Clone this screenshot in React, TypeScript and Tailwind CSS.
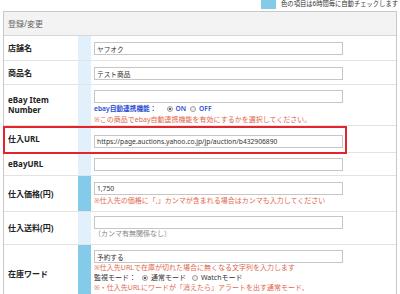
import React from 'react';

const FONT = "font-['Noto_Sans','Noto_Sans_CJK_JP',sans-serif]";

interface RowProps {
  label: React.ReactNode;
  dark?: boolean;
  h: string;
  pt: string;
  children: React.ReactNode;
  className?: string;
}

const Row: React.FC<RowProps> = ({ label, dark = false, h, pt, children, className = '' }) => (
  <div className={`flex border-b border-[#e3e3e3] ${h} ${className}`}>
    <div className="w-[74px] pl-[4px] flex items-center text-[8px] leading-[10px] font-bold text-[#222]">
      {label}
    </div>
    <div className={`w-[13px] ${dark ? 'bg-[#84cbea]' : 'bg-[#e1f0fb]'}`} />
    <div className={`flex-1 pl-[3px] flex flex-col ${pt}`}>{children}</div>
  </div>
);

const Field: React.FC<{ value?: string }> = ({ value = '' }) => (
  <input
    readOnly
    value={value}
    className="w-[249px] h-[13px] shrink-0 border border-[#c6c6c6] bg-white px-[2px] text-[6.7px] text-[#333] outline-none"
  />
);

const Radio: React.FC<{ checked?: boolean }> = ({ checked = false }) => (
  <span className="inline-flex w-[6px] h-[6px] rounded-full border border-[#a0a0a0] bg-[#eee] items-center justify-center mr-[3px]">
    {checked && <span className="w-[2px] h-[2px] rounded-full bg-[#333]" />}
  </span>
);

const Note: React.FC<{ children: React.ReactNode; color?: string; lh?: string }> = ({
  children,
  color = 'text-[#e2664c]',
  lh = 'leading-[10px]',
}) => <div className={`text-[7px] whitespace-nowrap ${lh} ${color}`}>{children}</div>;

export default function App() {
  return (
    <div className={`w-[400px] h-[294px] overflow-hidden bg-white ${FONT}`}>
      {/* legend */}
      <div className="h-[11px] flex justify-end items-start pr-[2px]">
        <span className="w-[15px] h-[9px] bg-[#84cbea] mr-[5px]" />
        <span className="text-[6.3px] leading-[10px] text-[#333] mt-[-1px]">色の項目は6時間毎に自動チェックします</span>
      </div>

      <div className="mx-[3px] border border-[#c8c8c8]">
        <div className="h-[24px] bg-[#f3f3f3] border-b border-[#d6d6d6] pl-[4px] flex items-center text-[8px] text-[#666]">
          登録/変更
        </div>

        <Row label="店舗名" h="h-[25px]" pt="pt-[6px]">
          <Field value="ヤフオク" />
        </Row>

        <Row label="商品名" h="h-[24px]" pt="pt-[6px]">
          <Field value="テスト商品" />
        </Row>

        <Row
          label={
            <span>
              eBay Item
              <br />
              Number
            </span>
          }
          h="h-[41px]"
          pt="pt-[5px]"
        >
          <Field />
          <div className="flex items-center text-[6.7px] leading-[12px] text-[#2a49d3] font-semibold whitespace-nowrap">
            <span className="mr-[10px]">ebay自動連携機能：</span>
            <Radio checked />
            <span className="mr-[4px]">ON</span>
            <Radio />
            <span>OFF</span>
          </div>
          <Note>※この商品でebay自動連携機能を有効にするかを選択してください。</Note>
        </Row>

        <Row label="仕入URL" h="h-[27px]" pt="pt-[9px]" className="relative">
          <div className="absolute top-0 left-[-1px] w-[344px] h-[28px] border-2 border-[#e3242b]" />
          <Field value="https://page.auctions.yahoo.co.jp/jp/auction/b432906890" />
        </Row>

        <Row label="eBayURL" h="h-[23px]" pt="pt-[5px]">
          <Field />
        </Row>

        <Row label="仕入価格(円)" dark h="h-[36px]" pt="pt-[6px]">
          <Field value="1,750" />
          <Note lh="leading-[12px]">※仕入先の価格に「,」カンマが含まれる場合はカンマも入力してください</Note>
        </Row>

        <Row label="仕入送料(円)" h="h-[33px]" pt="pt-[4px]">
          <Field />
          <Note color="text-[#888]">（カンマ有無関係なし）</Note>
        </Row>

        <Row label="在庫ワード" dark h="h-[58px]" pt="pt-[5px]">
          <Field value="予約する" />
          <Note>※仕入先URLで在庫が切れた場合に無くなる文字列を入力します</Note>
          <div className="flex items-center text-[7px] leading-[10px] text-[#333] whitespace-nowrap">
            <span className="mr-[6px]">監視モード：</span>
            <Radio checked />
            <span className="mr-[6px]">通常モード</span>
            <Radio />
            <span>Watchモード</span>
          </div>
          <Note>※・仕入先URLにワードが「消えたら」アラートを出す通常モード、</Note>
        </Row>
      </div>
    </div>
  );
}
